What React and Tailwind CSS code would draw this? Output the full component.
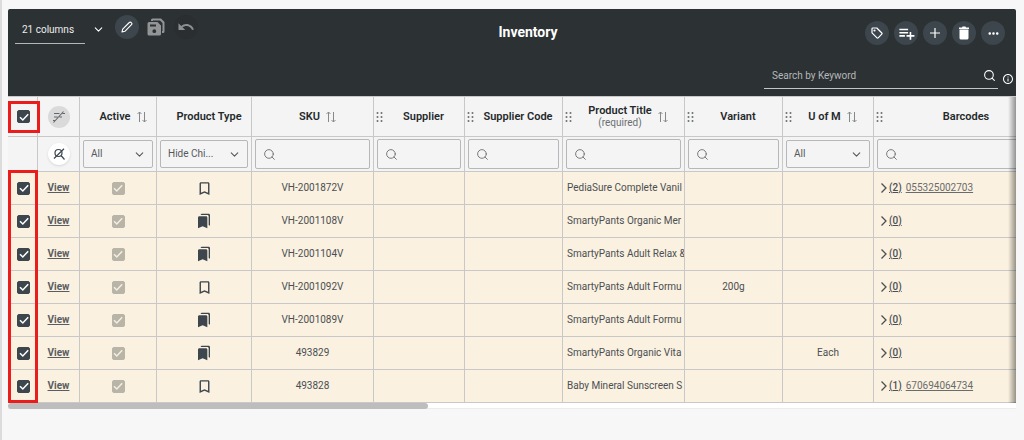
import React, { useState } from 'react';
import { MdBookmarkBorder, MdBookmarks, MdPlaylistAdd, MdOutlineInfo, MdMoreHoriz, MdUndo } from 'react-icons/md';
import { ChevronDown, Search } from 'lucide-react';

const COLUMNS = [
  { id: 'active', label: 'Active', width: 'w-[77px]', sort: true, filter: 'All' },
  { id: 'type', label: 'Product Type', width: 'w-[95px]', filter: 'Hide Chi...' },
  { id: 'sku', label: 'SKU', width: 'w-[122px]', sort: true },
  { id: 'supplier', label: 'Supplier', width: 'w-[91px]', grip: true },
  { id: 'supplierCode', label: 'Supplier Code', width: 'w-[98px]', grip: true },
  { id: 'title', label: 'Product Title', note: '(required)', width: 'w-[122px]', grip: true, sort: true },
  { id: 'variant', label: 'Variant', width: 'w-[98px]', grip: true },
  { id: 'uom', label: 'U of M', width: 'w-[91px]', grip: true, sort: true, filter: 'All' },
  { id: 'barcodes', label: 'Barcodes', width: 'w-[176px]', grip: true },
];

const ROWS = [
  { sku: 'VH-2001872V', title: 'PediaSure Complete Vanil', count: 2, barcode: '055325002703' },
  { sku: 'VH-2001108V', title: 'SmartyPants Organic Mer', parent: true, count: 0 },
  { sku: 'VH-2001104V', title: 'SmartyPants Adult Relax &', parent: true, count: 0 },
  { sku: 'VH-2001092V', title: 'SmartyPants Adult Formu', variant: '200g', count: 0 },
  { sku: 'VH-2001089V', title: 'SmartyPants Adult Formu', parent: true, count: 0 },
  { sku: '493829', title: 'SmartyPants Organic Vita', parent: true, uom: 'Each', count: 0 },
  { sku: '493828', title: 'Baby Mineral Sunscreen S', count: 1, barcode: '670694064734' },
];

function Checkbox({ label, muted, ...props }) {
  return (
    <span className="inline-grid place-items-center align-middle">
      <input
        type="checkbox"
        aria-label={label}
        className={`peer col-start-1 row-start-1 size-[13px] appearance-none rounded-xs border ${
          muted ? 'border-[#b9b4a8] bg-[#b9b4a8]' : 'border-[#3d464d] checked:bg-[#3d464d]'
        }`}
        {...props}
      />
      <svg viewBox="0 0 12 12" className="pointer-events-none invisible col-start-1 row-start-1 size-3 peer-checked:visible" fill="none" stroke={muted ? '#f6eedd' : '#fff'} strokeWidth="1.5">
        <path d="M2 6.2 4.8 9 10.2 3.2" />
      </svg>
    </span>
  );
}

function SortIcon() {
  return (
    <svg viewBox="0 0 10 12" className="h-3 w-2.5 shrink-0" fill="none" stroke="#85898c" strokeWidth="1">
      <path d="M2.5 11V1M.5 3 2.5 1l2 2M7.5 1v10M5.5 9l2 2 2-2" />
    </svg>
  );
}

function Grip() {
  return (
    <svg viewBox="0 0 7 10" className="h-2.5 w-[7px] shrink-0" fill="#6a6e71">
      {[1, 5, 9].map((y) => (
        <React.Fragment key={y}>
          <circle cx="1.5" cy={y} r="1" />
          <circle cx="5.5" cy={y} r="1" />
        </React.Fragment>
      ))}
    </svg>
  );
}

function RoundButton({ label, children }) {
  return (
    <button type="button" aria-label={label} className="flex size-6 shrink-0 items-center justify-center rounded-full bg-[#3d464d] text-white">
      {children}
    </button>
  );
}

function Toolbar() {
  return (
    <header className="rounded-t-xs bg-[#2c3134] pt-1.5 pb-[7px] text-white">
      <div className="flex h-[34px] items-start">
        <div className="flex flex-1 items-start pl-[7px]">
          <button type="button" className="flex h-[29px] items-center">
            <span className="flex h-full w-[70px] items-center border-b border-[#b4b7b8] pl-[7px] text-[10px] text-[#eceded]">21 columns</span>
            <ChevronDown size={13} className="ml-[7px]" />
          </button>
          <div className="ml-[10px] flex items-center gap-[5px]">
            <RoundButton label="Edit">
              <svg viewBox="0 0 12 12" className="size-3" fill="none" stroke="#fff" strokeWidth="1.1" strokeLinejoin="round">
                <path d="M1 11 1.7 8.1 8.3 1.5a1.3 1.3 0 0 1 1.9 0l.3.3a1.3 1.3 0 0 1 0 1.9L3.9 10.3Z" />
              </svg>
            </RoundButton>
            <button type="button" aria-label="Save all" className="flex size-6 items-center justify-center">
              <svg viewBox="0 0 18 18" className="size-[18px]" fill="#929495" fillRule="evenodd">
                <path d="M2 4h8.500L14 7.500V16q0 1.500-1.500 1.500H2Q.5 17.500.5 16V5.500Q.5 4 2 4ZM3 6.500v2h6v-2ZM7.300 11.300a1.900 1.900 0 1 0 0 3.800 1.900 1.900 0 1 0 0-3.800Z" />
                <path d="M4 3V2Q4 .5 5.500.5H14L17.500 4v9.500q0 1.500-1.500 1.500h-1V13h.5V5L13 2.500H6V3Z" />
              </svg>
            </button>
            <button type="button" aria-label="Undo" className="ml-px flex size-6 items-center justify-center rounded-full bg-[#2a2e31] text-[#8d9092]">
              <MdUndo size={18} />
            </button>
          </div>
        </div>
        <h1 className="pt-[7px] pl-9 text-sm leading-5 font-bold">Inventory</h1>
        <div className="flex flex-1 justify-end gap-[5px] pt-1.5 pr-[11px]">
          <RoundButton label="Tags">
            <svg viewBox="0 0 12 12" className="size-3" fill="none" stroke="#fff" strokeWidth="1.2" strokeLinejoin="round">
              <path d="M1 1.800Q1 1 1.800 1H5.800L10.800 6q.6.600 0 1.200L7.200 10.800q-.6.600-1.200 0L1 5.800Z" />
              <circle cx="3.500" cy="3.500" r=".5" fill="#fff" />
            </svg>
          </RoundButton>
          <RoundButton label="Add to list"><MdPlaylistAdd size={19} /></RoundButton>
          <RoundButton label="Add">
            <svg viewBox="0 0 12 12" className="size-3" stroke="#fff" strokeWidth="1.2"><path d="M6 1v10M1 6h10" /></svg>
          </RoundButton>
          <RoundButton label="Delete">
            <svg viewBox="0 0 12 14" className="h-3.5 w-3" fill="#fff">
              <path d="M1 1.500h3L4.500.5h3l.5 1h3V3H1ZM1.500 3.500h9V12q0 1.500-1.500 1.500H3Q1.500 13.500 1.500 12Z" />
            </svg>
          </RoundButton>
          <RoundButton label="More"><MdMoreHoriz size={15} /></RoundButton>
        </div>
      </div>
      <div className="mt-3 flex items-center justify-end pr-0.5">
        <label className="flex h-7 w-[234px] items-center border-b border-[#c3c5c6] pt-0.5 pr-0.5 pl-2">
          <input type="text" aria-label="Search by Keyword" placeholder="Search by Keyword" className="min-w-0 flex-1 text-[10px] outline-none placeholder:text-[#b5b8b9]" />
          <Search size={13} />
        </label>
        <MdOutlineInfo size={12} className="mt-2 ml-1" />
      </div>
    </header>
  );
}

function ColumnFilter({ column }) {
  if (column.filter) {
    return (
      <div className="relative flex items-center">
        <select aria-label={`${column.label} filter`} className="h-7 w-full appearance-none rounded-xs border border-[#b5b7b9] pl-[7px] text-[10px] text-[#55595c]">
          <option>{column.filter}</option>
        </select>
        <ChevronDown size={13} className="pointer-events-none absolute right-[7px] text-[#55595c]" />
      </div>
    );
  }
  return (
    <label className="flex h-[30px] items-center rounded-xs border border-[#b5b7b9] pl-[7px]">
      <Search size={13} strokeWidth={1.75} className="shrink-0 text-[#6f7376]" />
      <input type="text" aria-label={`${column.label} filter`} className="min-w-0 flex-1 px-1 text-[10px] outline-none" />
    </label>
  );
}

const CELL = 'border-r border-b border-[#c9c8c9] p-0';

export default function App() {
  const [selected, setSelected] = useState(ROWS.map(() => true));
  const toggle = (i) => setSelected(selected.map((on, n) => (n === i ? !on : on)));
  const allSelected = selected.every(Boolean);

  return (
    <div className="min-h-screen border-l-2 border-[#dcdcdc] bg-[#f7f7f7] pt-[9px] pr-2 pl-1.5 font-['Roboto',sans-serif] text-[#4b4f52]">
      <Toolbar />

      <div className="relative overflow-hidden border-t border-[#c9c8c9]">
        <table className="w-[1042px] table-fixed border-separate border-spacing-0 text-center text-[10px] leading-4">
          <thead className="bg-[#f4f4f4]">
            <tr className="h-10">
              <th className={`${CELL} w-[30px] pl-0.5`}>
                <Checkbox label="Select all" checked={allSelected} onChange={() => setSelected(ROWS.map(() => !allSelected))} />
              </th>
              <th className={`${CELL} w-[42px]`}>
                <button type="button" aria-label="Clear sorting" className="mx-auto flex size-[22px] items-center justify-center rounded-full bg-[#dadada]">
                  <svg viewBox="0 0 14 12" className="h-3 w-3.5" fill="none" stroke="#63676a" strokeWidth="1.1">
                    <path d="M2 2.500h5.500M10.500 2.500H13M2 6h3.500M7.500 6H10M1 9.500h2M1.500 11.500 11.500.5" />
                  </svg>
                </button>
              </th>
              {COLUMNS.map((column) => (
                <th key={column.id} className={`${CELL} ${column.width} text-[11px] font-semibold text-[#25292b]`}>
                  <div className={`flex items-center ${column.grip ? 'pl-0.5' : 'pl-2.5'}`}>
                    {column.grip && <Grip />}
                    <div className="flex flex-1 items-center justify-center gap-1.5 whitespace-nowrap">
                      <span className="leading-3">
                        {column.label}
                        {column.note && <span className="block text-[10px] font-normal text-[#6a6e71]">{column.note}</span>}
                      </span>
                      {column.sort && <SortIcon />}
                    </div>
                  </div>
                </th>
              ))}
            </tr>
            <tr className="h-[35px]">
              <td className={CELL} />
              <td className={CELL}>
                <button type="button" aria-label="Clear filters" className="mx-auto flex size-[22px] items-center justify-center rounded-full bg-white shadow">
                  <svg viewBox="0 0 12 12" className="size-3" fill="none" stroke="#3d464d" strokeWidth="1.2">
                    <circle cx="5.500" cy="5" r="3.500" />
                    <path d="m8 7.500 3.500 4M1 10.500 11 .8" />
                  </svg>
                </button>
              </td>
              {COLUMNS.map((column) => (
                <td key={column.id} className={`${CELL} px-[3px]`}>
                  <ColumnFilter column={column} />
                </td>
              ))}
            </tr>
          </thead>
          <tbody className="bg-[#faf1e0]">
            {ROWS.map((row, i) => (
              <tr key={row.sku} className="h-[33px]">
                <td className={`${CELL} pl-0.5`}>
                  <Checkbox label={`Select ${row.sku}`} checked={selected[i]} onChange={() => toggle(i)} />
                </td>
                <td className={CELL}>
                  <a href="#view" className="font-bold text-[#5a5d5f] underline">View</a>
                </td>
                <td className={CELL}>
                  <Checkbox label={`${row.sku} active`} muted checked disabled readOnly />
                </td>
                <td className={CELL}>
                  {row.parent
                    ? <MdBookmarks size={16} className="mx-auto text-[#3d464d]" />
                    : <MdBookmarkBorder size={17} className="mx-auto text-[#3d464d]" />}
                </td>
                <td className={CELL}>{row.sku}</td>
                <td className={CELL} />
                <td className={CELL} />
                <td className={`${CELL} pl-1 text-left`}>
                  <div className="overflow-hidden whitespace-nowrap">{row.title}</div>
                </td>
                <td className={CELL}>{row.variant}</td>
                <td className={CELL}>{row.uom}</td>
                <td className={CELL}>
                  <div className="flex items-center pl-[7px]">
                    <svg viewBox="0 0 6 10" className="mr-0.5 h-2.5 w-1.5" fill="none" stroke="#4b4f52" strokeWidth="1.3"><path d="m.5.5 4.500 4.500L.5 9.500" /></svg>
                    <a href="#barcodes" className="font-medium underline">({row.count})</a>
                    {row.barcode && <a href="#barcode" className="ml-1 text-[#6a6c6c] underline">{row.barcode}</a>}
                  </div>
                </td>
              </tr>
            ))}
          </tbody>
        </table>

        <div className="pointer-events-none absolute inset-y-0 right-0 w-2 bg-linear-to-r from-transparent to-black/40" />
        {/* Selection highlights */}
        <div className="pointer-events-none absolute top-1 left-0 h-8 w-8 border-3 border-[#ea1c1c]" />
        <div className="pointer-events-none absolute top-[73px] bottom-0 left-0 w-[30px] border-3 border-[#ea1c1c]" />
      </div>

      <div className="h-1.5 border-b border-[#ececec] bg-white">
        <div className="h-1.5 w-5/12 rounded-sm bg-[#bdbdbd]" />
      </div>
    </div>
  );
}
